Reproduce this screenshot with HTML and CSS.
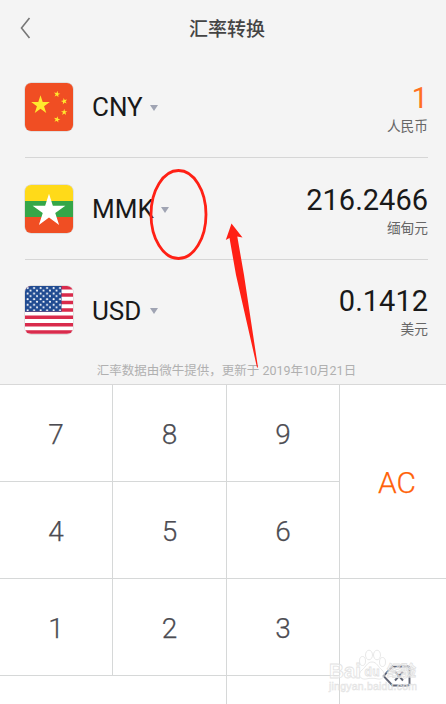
FILE: index.html
```html
<!DOCTYPE html>
<html lang="zh-CN">
<head>
<meta charset="utf-8">
<title>汇率转换</title>
<link rel="stylesheet" href="styles.css">
</head>
<body>
<main class="app">
  <header class="header">
    <svg class="back" width="14" height="24" viewBox="0 0 14 24"><path d="M11.500 2 3.500 12l8 10"/></svg>
    <h1 class="title">汇率转换</h1>
  </header>

  <section class="rates">
    <div class="rate">
      <svg class="flag" viewBox="0 0 48 48">
        <defs><path id="star" d="M0-1 .2245-.309.951-.309.363.118.588.809 0 .382-.588.809-.363.118-.951-.309-.2245-.309Z"/></defs>
        <rect width="48" height="48" fill="#f04e23"/>
        <g fill="#ffe92e">
          <use href="#star" transform="translate(15.500 22) scale(9.800)"/>
          <use href="#star" transform="translate(32 11.200) rotate(10) scale(3.400)"/>
          <use href="#star" transform="translate(39.200 18.300) rotate(-12) scale(3.400)"/>
          <use href="#star" transform="translate(39.200 29.200) scale(3.400)"/>
          <use href="#star" transform="translate(32 36.500) rotate(12) scale(3.400)"/>
        </g>
      </svg>
      <span class="code">CNY</span><i class="caret"></i>
      <div class="amount"><span class="value active">1</span><span class="unit">人民币</span></div>
    </div>
    <div class="rate">
      <svg class="flag" viewBox="0 0 48 48">
        <rect width="48" height="16" fill="#ffda19"/>
        <rect y="16" width="48" height="16" fill="#35a648"/>
        <rect y="32" width="48" height="16" fill="#f04e23"/>
        <use href="#star" fill="#fff" transform="translate(24 26) scale(17.200)"/>
      </svg>
      <span class="code">MMK</span><i class="caret"></i>
      <div class="amount"><span class="value">216.2466</span><span class="unit">缅甸元</span></div>
    </div>
    <div class="rate last">
      <svg class="flag" viewBox="0 0 48 48">
        <defs>
          <pattern id="dots" width="6.500" height="5.600" patternUnits="userSpaceOnUse">
            <circle cx="2.600" cy="2" r="1.050" fill="#fff"/><circle cx="5.500" cy="4.500" r="1.050" fill="#fff"/>
          </pattern>
        </defs>
        <rect width="48" height="48" fill="#fff"/>
        <path stroke="#d92b4c" stroke-width="3.500" d="M0 1.700h48M0 9.100h48M0 16.500h48M0 23.900h48M0 31.300h48M0 38.700h48M0 46.100h48"/>
        <rect width="36.500" height="25.700" fill="#204b91"/>
        <rect width="36" height="25" fill="url(#dots)"/>
      </svg>
      <span class="code">USD</span><i class="caret"></i>
      <div class="amount"><span class="value">0.1412</span><span class="unit">美元</span></div>
    </div>
    <p class="note">汇率数据由微牛提供，更新于 2019年10月21日</p>
  </section>

  <section class="keypad">
    <div class="key">7</div><div class="key">8</div><div class="key">9</div>
    <div class="key clear">AC</div>
    <div class="key">4</div><div class="key">5</div><div class="key">6</div>
    <div class="key">1</div><div class="key">2</div><div class="key">3</div>
    <div class="key erase">
      <svg width="30" height="22" viewBox="0 0 30 22"><path d="M10.500 1.500H26q1.500 0 1.500 1.500v16q0 1.500-1.500 1.500H10.500L1.500 11ZM13 6.500l8 9M21 6.500l-8 9"/></svg>
    </div>
    <div class="key zero"></div><div class="key"></div>
  </section>

  <svg class="overlay" width="446" height="704" viewBox="0 0 446 704">
    <ellipse cx="178.500" cy="214.500" rx="27.500" ry="44" fill="none" stroke="#ff2015" stroke-width="2.800"/>
    <path fill="#ff2015" d="M231.500 223.500 242.500 237.500l-5.200-1L244 275l14 92.500h-1L236 275l-6.500-37-3.700 2Z"/>
    <g class="watermark">
      <text x="329" y="678" font-size="21" textLength="32" lengthAdjust="spacingAndGlyphs">Bai</text>
      <text x="387" y="676" font-size="15" textLength="29">经验</text>
      <ellipse cx="362.500" cy="661" rx="3" ry="4.500"/>
      <ellipse cx="369" cy="655" rx="3.500" ry="4.800"/>
      <ellipse cx="377" cy="655" rx="3.500" ry="4.800"/>
      <ellipse cx="382.500" cy="662" rx="3" ry="4.500"/>
      <path d="M372 662c5 0 6 5 10 8 5 5 1 10-4 9-4-1-8-1-12 0-6 1-9-5-4-9 4-3 5-8 10-8Z"/>
      <text x="364.500" y="676" font-size="12" textLength="15">du</text>
      <text class="site" x="329" y="689.500" font-size="10.500" textLength="88">jingyan.baidu.com</text>
    </g>
  </svg>
</main>
</body>
</html>
```
FILE: styles.css
```css
* { box-sizing: border-box; }
body { margin: 0; background: #f4f4f4; font-family: Roboto, "Noto Sans CJK SC", sans-serif; }
.app { position: relative; width: 446px; height: 704px; overflow: hidden; display: flex; flex-direction: column; }

.header { height: 56px; flex: none; display: grid; grid-template-columns: 54px 1fr 46px; align-items: center; }
.back { margin-left: 18px; fill: none; stroke: #777; stroke-width: 1.6; }
.title { margin: 0; text-align: center; font-size: 19px; line-height: 28px; font-weight: 500; color: #444; font-family: "Noto Sans CJK SC", sans-serif; }

.rates { height: 328px; flex: none; padding: 0 18px 0 25px; }
.rate { height: 102px; display: flex; align-items: center; border-bottom: 1px solid #d6d6d6; }
.rate.last { height: 100px; border-bottom: 0; }
.flag { width: 48px; height: 48px; border-radius: 6px; flex: none; box-shadow: 0 0 0 .5px rgba(90, 80, 80, .25); }
.code { margin-left: 19px; font-size: 26px; line-height: 32px; padding-top: 1px; color: #191919; }
.caret { margin-left: 7px; margin-top: 2px; border: 4.5px solid transparent; border-top: 6px solid #a0a4b3; border-bottom: 0; }
.last .caret { margin-left: 9px; }
.amount { margin-left: auto; padding-top: 4px; display: flex; flex-direction: column; align-items: flex-end; }
.value { font-size: 29px; line-height: 34px; color: #191919; }
.value.active { color: #ff7020; }
.unit { font-size: 13.7px; line-height: 22px; color: #666; }
.note { margin: 0; height: 20px; line-height: 22px; font-size: 12.5px; color: #b0b0b0; text-align: center; }

.keypad { height: 417px; flex: none; display: grid; grid-template-columns: 113px 114px 113px 106px; grid-template-rows: repeat(4, 97px); border-top: 1px solid #d8d8d8; background: #fff; }
.key { display: flex; align-items: center; justify-content: center; padding-top: 2px; border-right: 1px solid #d6d8d8; border-bottom: 1px solid #d6d8d8; font-size: 28px; font-weight: 300; -webkit-text-stroke: .25px currentColor; color: #4c4c52; background: #fff; }
.clear { grid-column: 4; grid-row: 1 / span 2; border-right: 0; color: #ff6208; padding-left: 8px; font-size: 30px; }
.erase { grid-column: 4; grid-row: 3 / span 2; border-right: 0; padding: 1px 0 0 8px; }
.erase svg { fill: none; stroke: #626675; stroke-width: 1.9; }
.zero { grid-column: 1 / span 2; }

.overlay { position: absolute; left: 0; top: 0; }
.watermark { fill: #fff; fill-opacity: .45; stroke: #e2e2e2; stroke-width: .8; font-family: "Liberation Sans", "Noto Sans CJK SC", sans-serif; font-weight: bold; }
.site { font-weight: normal; fill: #eee; stroke-width: .5; }
```
